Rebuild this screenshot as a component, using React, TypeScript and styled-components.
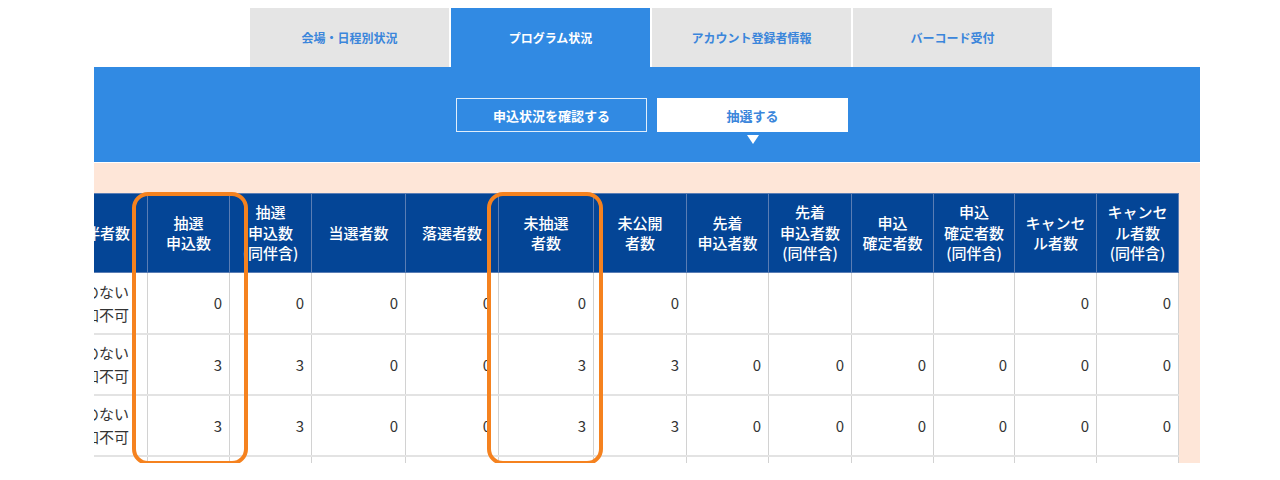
import React from "react";
import styled, { createGlobalStyle } from "styled-components";

const GlobalStyle = createGlobalStyle`
  html, body { margin: 0; padding: 0; background: #ffffff; }
  body { font-family: "Noto Sans CJK JP", "Noto Sans", sans-serif; }
  * { box-sizing: border-box; }
`;

const Page = styled.div`
  width: 1106px;
  margin-left: 94px;
  padding-top: 8px;
`;

const TabRow = styled.nav`
  display: flex;
  justify-content: center;
  gap: 2px;
  padding-left: 8px;
`;

const Tab = styled.div<{ $active?: boolean }>`
  width: 199px;
  height: 59px;
  display: flex;
  align-items: center;
  justify-content: center;
  font-size: 12px;
  font-weight: 700;
  background: ${(p) => (p.$active ? "#318ae3" : "#e5e5e5")};
  color: ${(p) => (p.$active ? "#ffffff" : "#3b86db")};
`;

const BlueBar = styled.div`
  background: #318ae3;
  height: 95px;
  padding-top: 31px;
  display: flex;
  justify-content: center;
  gap: 10px;
  padding-left: 10px;
`;

const ModeButton = styled.div<{ $active?: boolean }>`
  position: relative;
  width: 191px;
  height: 34px;
  display: flex;
  align-items: center;
  justify-content: center;
  font-size: 13px;
  font-weight: 700;
  border: 1px solid ${(p) => (p.$active ? "#ffffff" : "rgba(255,255,255,0.85)")};
  background: ${(p) => (p.$active ? "#ffffff" : "transparent")};
  color: ${(p) => (p.$active ? "#3b86db" : "#ffffff")};
  ${(p) =>
    p.$active
      ? `&::after {
    content: "";
    position: absolute;
    left: 50%;
    top: 36px;
    margin-left: -6px;
    border-left: 6px solid transparent;
    border-right: 6px solid transparent;
    border-top: 9px solid #ffffff;
  }`
      : ""}
`;

const Section = styled.div`
  position: relative;
  margin-top: 1px;
`;

const PeachArea = styled.div`
  height: 300px;
  background: #fee6d8;
  overflow: hidden;
  display: flex;
  justify-content: flex-end;
  padding: 30px 21px 0 0;
`;

const Table = styled.table`
  flex-shrink: 0;
  width: 1141px;
  table-layout: fixed;
  border-collapse: collapse;
  background: #ffffff;
`;

const HeadRow = styled.tr`
  height: 79px;
`;

const Th = styled.th<{ $label?: boolean }>`
  background: #044596;
  color: #ffffff;
  font-size: 15px;
  font-weight: 500;
  line-height: 20.5px;
  text-align: ${(p) => (p.$label ? "right" : "center")};
  vertical-align: middle;
  border: 1px solid #5a7db4;
  padding: 0 ${(p) => (p.$label ? "17px" : "0")} 0 0;
  white-space: nowrap;
`;

const BodyRow = styled.tr`
  height: 61px;
`;

const Td = styled.td<{ $label?: boolean }>`
  font-size: 15px;
  color: #333333;
  line-height: 23px;
  text-align: right;
  vertical-align: middle;
  padding: 0 ${(p) => (p.$label ? "18px" : "7px")} 0 0;
  border-left: 1px solid #d2d2d2;
  border-right: 1px solid #d2d2d2;
  border-bottom: 2px solid #e3e3e3;
  white-space: nowrap;
`;

const Highlight = styled.div<{ $left: number }>`
  position: absolute;
  top: 29px;
  left: ${(p) => p.$left}px;
  width: 116px;
  height: 273px;
  border: 4px solid #f5821f;
  border-radius: 16px;
  pointer-events: none;
`;

const colWidths = [110, 82, 82, 94, 93, 95, 93, 82, 83, 82, 81, 82, 82];

const headers: string[][] = [
  ["抽選", "申込数"],
  ["抽選", "申込数", "(同伴含)"],
  ["当選者数"],
  ["落選者数"],
  ["未抽選", "者数"],
  ["未公開", "者数"],
  ["先着", "申込者数"],
  ["先着", "申込者数", "(同伴含)"],
  ["申込", "確定者数"],
  ["申込", "確定者数", "(同伴含)"],
  ["キャンセ", "ル者数"],
  ["キャンセ", "ル者数", "(同伴含)"],
];

const rows: string[][] = [
  ["0", "0", "0", "0", "0", "0", "", "", "", "", "0", "0"],
  ["3", "3", "0", "0", "3", "3", "0", "0", "0", "0", "0", "0"],
  ["3", "3", "0", "0", "3", "3", "0", "0", "0", "0", "0", "0"],
  ["", "", "", "", "", "", "", "", "", "", "", ""],
];

const Lines: React.FC<{ lines: string[] }> = ({ lines }) => (
  <>
    {lines.map((l, i) => (
      <React.Fragment key={i}>
        {i > 0 && <br />}
        {l}
      </React.Fragment>
    ))}
  </>
);

export default function App() {
  return (
    <>
      <GlobalStyle />
      <Page>
        <TabRow>
          <Tab>会場・日程別状況</Tab>
          <Tab $active>プログラム状況</Tab>
          <Tab>アカウント登録者情報</Tab>
          <Tab>バーコード受付</Tab>
        </TabRow>
        <BlueBar>
          <ModeButton>申込状況を確認する</ModeButton>
          <ModeButton $active>抽選する</ModeButton>
        </BlueBar>
        <Section>
          <PeachArea>
            <Table>
              <colgroup>
                {colWidths.map((w, i) => (
                  <col key={i} style={{ width: w }} />
                ))}
              </colgroup>
              <thead>
                <HeadRow>
                  <Th $label>同伴者数</Th>
                  {headers.map((h, i) => (
                    <Th key={i}>
                      <Lines lines={h} />
                    </Th>
                  ))}
                </HeadRow>
              </thead>
              <tbody>
                {rows.map((r, ri) => (
                  <BodyRow key={ri}>
                    <Td $label>
                      {ri < 3 ? <Lines lines={["制限のない", "参加不可"]} /> : ""}
                    </Td>
                    {r.map((v, ci) => (
                      <Td key={ci}>{v}</Td>
                    ))}
                  </BodyRow>
                ))}
              </tbody>
            </Table>
          </PeachArea>
          <Highlight $left={38} />
          <Highlight $left={393} />
        </Section>
      </Page>
    </>
  );
}
